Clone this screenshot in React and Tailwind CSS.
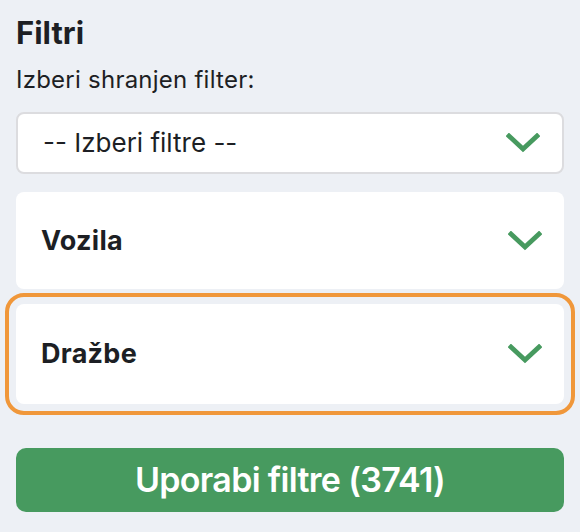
import React from "react";

function Chevron() {
  return (
    <svg width="34" height="20" viewBox="0 0 34 20" fill="none" className="shrink-0">
      <path d="M3 3 L17 16 L31 3" stroke="#479a5f" strokeWidth="4.8" strokeLinecap="square" strokeLinejoin="miter" />
    </svg>
  );
}

export default function App() {
  return (
    <div className="w-[580px] h-[532px] bg-[#edf0f5] px-4 pt-[13px] text-[#1d1f24]" style={{ fontFamily: "Inter, 'Noto Sans', sans-serif" }}>
      <h1 className="text-[31px] leading-[40px] font-bold">Filtri</h1>
      <p className="mt-[12px] text-[24px] leading-[30px] tracking-[0.01em]">Izberi shranjen filter:</p>
      <div className="mt-[17px] h-[62px] rounded-[8px] border-2 border-[#dcdcdf] bg-white flex items-center justify-between pl-[25px] pr-[22px]">
        <span className="text-[26px] leading-[30px]">-- Izberi filtre --</span>
        <Chevron />
      </div>
      <div className="mt-[18px] h-[97px] rounded-[8px] bg-white flex items-center justify-between pl-[25px] pr-[22px]">
        <span className="text-[27px] leading-[30px] font-bold tracking-[0.01em]">Vozila</span>
        <Chevron />
      </div>
      <div className="mt-[15px] h-[100px] rounded-[8px] bg-white flex items-center justify-between pl-[25px] pr-[22px] outline-4 outline-offset-[7px] outline-[#f0973a]">
        <span className="text-[27px] leading-[30px] font-bold tracking-[0.01em]">Dražbe</span>
        <Chevron />
      </div>
      <button className="mt-[44px] w-full h-[64px] rounded-[10px] bg-[#479a5f] text-white text-[34px] leading-[40px] font-semibold tracking-[-0.02em]">
        Uporabi filtre (3741)
      </button>
    </div>
  );
}
